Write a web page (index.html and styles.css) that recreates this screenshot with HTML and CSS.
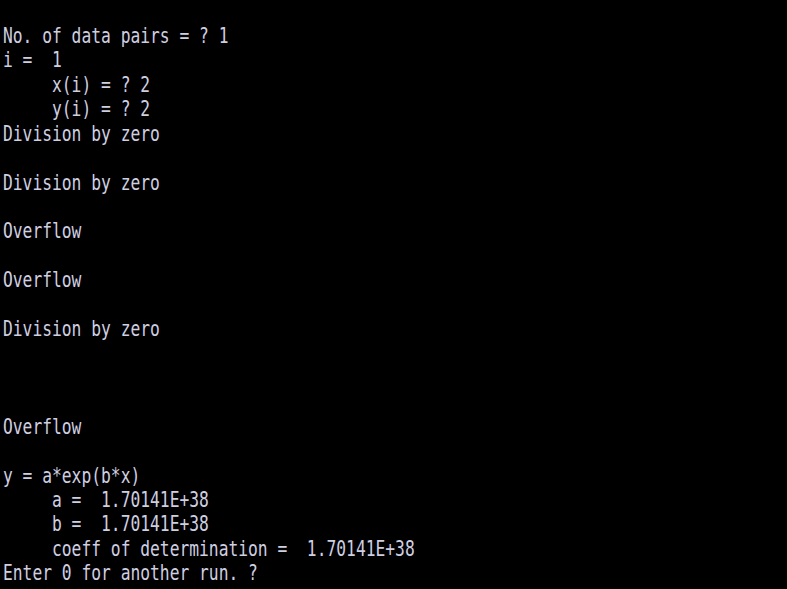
FILE: index.html
```html
<!DOCTYPE html>
<html>
<head>
<meta charset="utf-8">
<link rel="stylesheet" href="styles.css">
</head>
<body>
<div class="screen">
<div class="row">No. of data pairs = ? 1</div>
<div class="row">i =  1</div>
<div class="row">     x(i) = ? 2</div>
<div class="row">     y(i) = ? 2</div>
<div class="row">Division by zero</div>
<div class="row"> </div>
<div class="row">Division by zero</div>
<div class="row"> </div>
<div class="row">Overflow</div>
<div class="row"> </div>
<div class="row">Overflow</div>
<div class="row"> </div>
<div class="row">Division by zero</div>
<div class="row"> </div>
<div class="row"> </div>
<div class="row"> </div>
<div class="row">Overflow</div>
<div class="row"> </div>
<div class="row">y = a*exp(b*x)</div>
<div class="row">     a =  1.70141E+38</div>
<div class="row">     b =  1.70141E+38</div>
<div class="row">     coeff of determination =  1.70141E+38</div>
<div class="row">Enter 0 for another run. ?</div>
</div>
</body>
</html>
```
FILE: styles.css
```css
html, body {
  margin: 0;
  padding: 0;
  background: #000;
}
.screen {
  width: 787px;
  height: 589px;
  box-sizing: border-box;
  padding: 27px 0 0 3px;
  background: #000;
  color: #cfcfe0;
  font-family: "DejaVu Sans Mono", "Liberation Mono", monospace;
  font-size: 16.3px;
  overflow: hidden;
}
.row {
  height: 24.43px;
  line-height: 16.3px;
  white-space: pre;
  transform: scaleY(1.26);
  transform-origin: 0 0;
}
```
